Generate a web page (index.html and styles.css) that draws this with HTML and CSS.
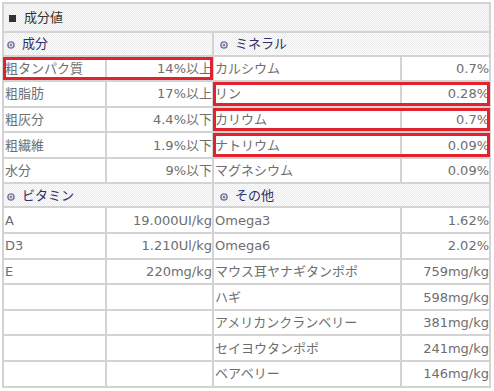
FILE: index.html
```html
<!DOCTYPE html>
<html lang="ja">
<head>
<meta charset="utf-8">
<title>成分値</title>
<link rel="stylesheet" href="styles.css">
</head>
<body>
<table class="nutri">
  <colgroup>
    <col class="c1"><col class="c2"><col class="c3"><col class="c4">
  </colgroup>
  <tr class="title">
    <td colspan="4"><span class="sq"></span>成分値</td>
  </tr>
  <tr class="sec">
    <td colspan="2"><svg class="ring" viewBox="0 0 8 8" width="8" height="8"><circle cx="4" cy="4" r="3.1" fill="#dfe0ea" stroke="#72769a" stroke-width="1.4"/><circle cx="4" cy="4" r="1.2" fill="#7e82a2"/></svg>成分</td>
    <td colspan="2" class="sec-r"><svg class="ring" viewBox="0 0 8 8" width="8" height="8"><circle cx="4" cy="4" r="3.1" fill="#dfe0ea" stroke="#72769a" stroke-width="1.4"/><circle cx="4" cy="4" r="1.2" fill="#7e82a2"/></svg>ミネラル</td>
  </tr>
  <tr>
    <td class="hl hl-l">粗タンパク質</td><td class="v hl hl-r">14%以上</td>
    <td>カルシウム</td><td class="v">0.7%</td>
  </tr>
  <tr>
    <td>粗脂肪</td><td class="v">17%以上</td>
    <td class="hl hl-l">リン</td><td class="v hl hl-r">0.28%</td>
  </tr>
  <tr>
    <td>粗灰分</td><td class="v">4.4%以下</td>
    <td class="hl hl-l">カリウム</td><td class="v hl hl-r">0.7%</td>
  </tr>
  <tr>
    <td>粗繊維</td><td class="v">1.9%以下</td>
    <td class="hl hl-l">ナトリウム</td><td class="v hl hl-r">0.09%</td>
  </tr>
  <tr>
    <td>水分</td><td class="v">9%以下</td>
    <td>マグネシウム</td><td class="v">0.09%</td>
  </tr>
  <tr class="sec">
    <td colspan="2"><svg class="ring" viewBox="0 0 8 8" width="8" height="8"><circle cx="4" cy="4" r="3.1" fill="#dfe0ea" stroke="#72769a" stroke-width="1.4"/><circle cx="4" cy="4" r="1.2" fill="#7e82a2"/></svg>ビタミン</td>
    <td colspan="2" class="sec-r"><svg class="ring" viewBox="0 0 8 8" width="8" height="8"><circle cx="4" cy="4" r="3.1" fill="#dfe0ea" stroke="#72769a" stroke-width="1.4"/><circle cx="4" cy="4" r="1.2" fill="#7e82a2"/></svg>その他</td>
  </tr>
  <tr>
    <td>A</td><td class="v">19.000UI/kg</td>
    <td>Omega3</td><td class="v">1.62%</td>
  </tr>
  <tr>
    <td>D3</td><td class="v">1.210Ul/kg</td>
    <td>Omega6</td><td class="v">2.02%</td>
  </tr>
  <tr>
    <td>E</td><td class="v">220mg/kg</td>
    <td>マウス耳ヤナギタンポポ</td><td class="v">759mg/kg</td>
  </tr>
  <tr>
    <td></td><td class="v"></td>
    <td>ハギ</td><td class="v">598mg/kg</td>
  </tr>
  <tr>
    <td></td><td class="v"></td>
    <td>アメリカンクランベリー</td><td class="v">381mg/kg</td>
  </tr>
  <tr>
    <td></td><td class="v"></td>
    <td>セイヨウタンポポ</td><td class="v">241mg/kg</td>
  </tr>
  <tr>
    <td></td><td class="v"></td>
    <td>ベアベリー</td><td class="v">146mg/kg</td>
  </tr>
</table>
</body>
</html>
```

FILE: styles.css
```css
html, body {
  margin: 0;
  background: #fff;
}
body {
  padding: 2px 0 0 2px;
  font-family: "DejaVu Sans", "Noto Sans CJK JP", sans-serif;
  font-size: 13px;
  color: #6e6e6e;
}
.nutri {
  border-collapse: collapse;
  table-layout: fixed;
  width: 489px;
}
.c1 { width: 103px; }
.c2 { width: 107px; }
.c3 { width: 188px; }
.c4 { width: 89px; }

.nutri td {
  border: 2px solid #d3d3d3;
  height: 23.6px;
  padding: 0 0 0 1px;
  vertical-align: middle;
  white-space: nowrap;
  overflow: visible;
  line-height: 1;
}
.nutri td.v {
  text-align: right;
  padding: 0;
}
.title td {
  height: 26.5px;
  padding-left: 5px;
  color: #333;
  background: repeating-conic-gradient(#e8e8e8 0 25%, #fbfbfb 0 50%) 0 0 / 2px 2px;
}
.sq {
  display: inline-block;
  width: 7px;
  height: 7px;
  background: #333;
  margin-right: 8px;
  vertical-align: 0;
}
.sec td {
  height: 22px;
  padding-left: 3px;
  color: #2e2f6b;
  background: repeating-conic-gradient(#ececec 0 25%, #fcfcfc 0 50%) 0 0 / 2px 2px;
}
.sec td.sec-r {
  padding-left: 6px;
}
.ring {
  display: inline-block;
  vertical-align: -1px;
  margin-right: 7px;
}
.hl {
  position: relative;
}
.hl::after {
  content: "";
  position: absolute;
  top: 0;
  bottom: 0;
  border: 3px solid #e2232e;
  pointer-events: none;
}
.hl-l::after {
  left: -1px;
  right: -3px;
  border-right: none;
}
.hl-r::after {
  left: -3px;
  right: -1px;
  border-left: none;
}
```
